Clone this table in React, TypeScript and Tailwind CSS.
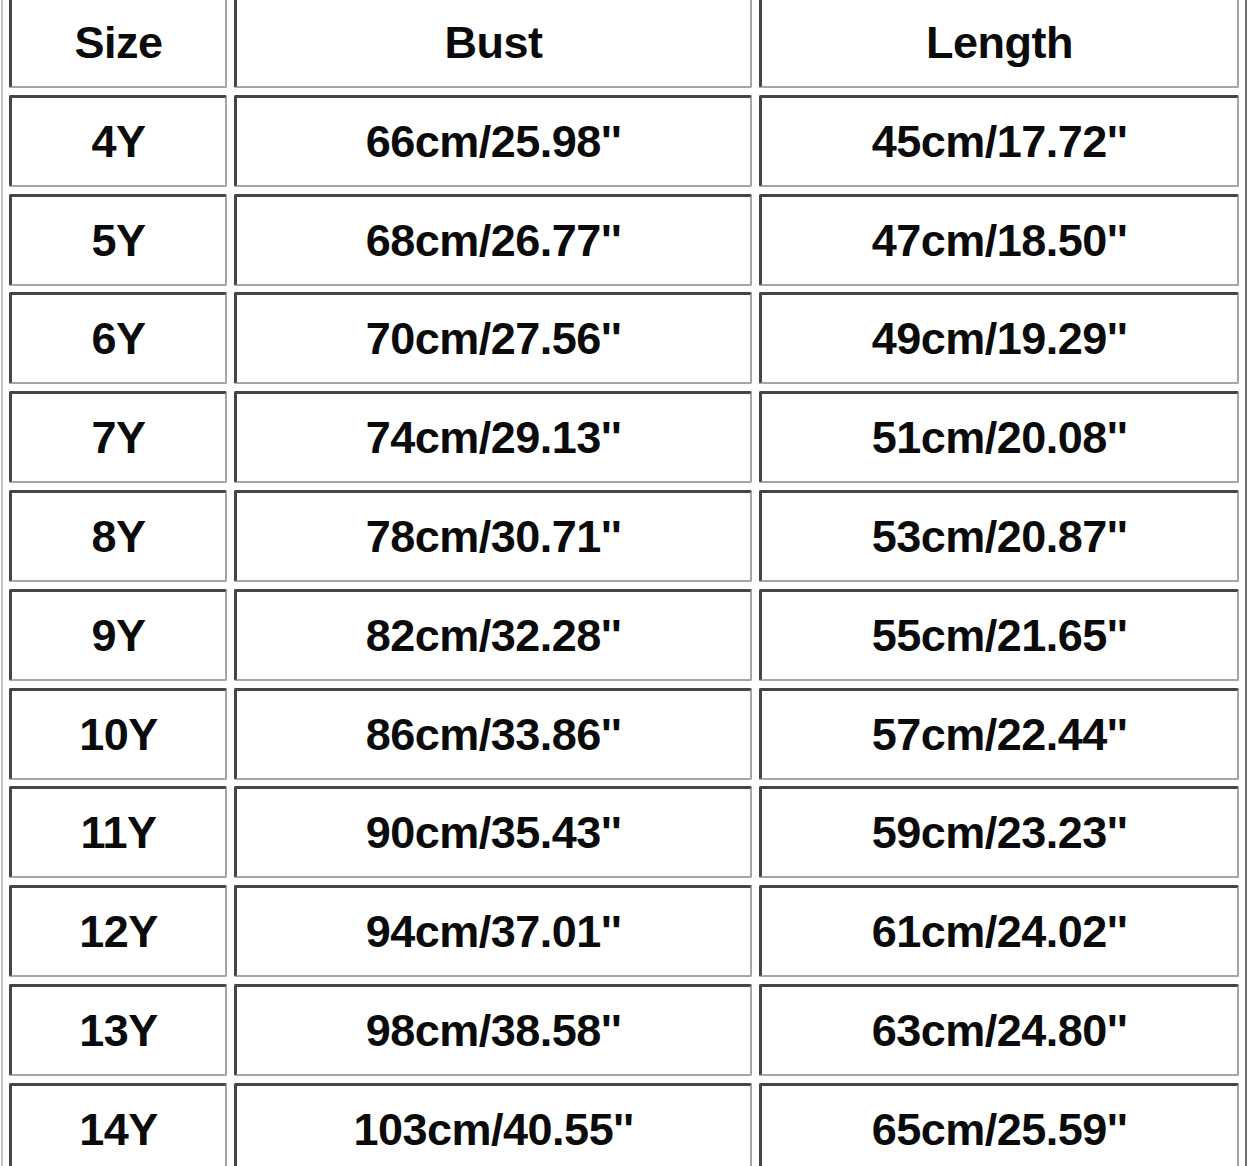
import React from "react";

const rows: [string, string, string][] = [
  ["4Y", "66cm/25.98''", "45cm/17.72''"],
  ["5Y", "68cm/26.77''", "47cm/18.50''"],
  ["6Y", "70cm/27.56''", "49cm/19.29''"],
  ["7Y", "74cm/29.13''", "51cm/20.08''"],
  ["8Y", "78cm/30.71''", "53cm/20.87''"],
  ["9Y", "82cm/32.28''", "55cm/21.65''"],
  ["10Y", "86cm/33.86''", "57cm/22.44''"],
  ["11Y", "90cm/35.43''", "59cm/23.23''"],
  ["12Y", "94cm/37.01''", "61cm/24.02''"],
  ["13Y", "98cm/38.58''", "63cm/24.80''"],
  ["14Y", "103cm/40.55''", "65cm/25.59''"],
];

function Cell({ children }: { children: React.ReactNode }) {
  return (
    <div className="h-[92px] flex items-center justify-center bg-white border-t-[3px] border-l-[3px] border-b-[2px] border-r-[2px] border-t-[#454545] border-l-[#454545] border-b-[#a5a5a5] border-r-[#a5a5a5] rounded-[2px] text-[45px] font-bold text-[#0b0b0b] leading-none tracking-[-0.5px]">
      {children}
    </div>
  );
}

export default function App() {
  return (
    <div className="w-[1250px] h-[1166px] overflow-hidden bg-white" style={{ fontFamily: '"Liberation Sans", Arial, sans-serif' }}>
      <div className="ml-[1px] -mt-[12px] w-[1246px] border-2 border-t-[#c4c4c4] border-l-[#c4c4c4] border-b-[#6e6e6e] border-r-[#6e6e6e] p-[6px]">
        <div className="grid grid-cols-[218px_518px_480px] gap-x-[7px] gap-y-[6.8px]">
          <Cell>Size</Cell>
          <Cell>Bust</Cell>
          <Cell>Length</Cell>
          {rows.map((r) => (
            <React.Fragment key={r[0]}>
              <Cell>{r[0]}</Cell>
              <Cell>{r[1]}</Cell>
              <Cell>{r[2]}</Cell>
            </React.Fragment>
          ))}
        </div>
      </div>
    </div>
  );
}
